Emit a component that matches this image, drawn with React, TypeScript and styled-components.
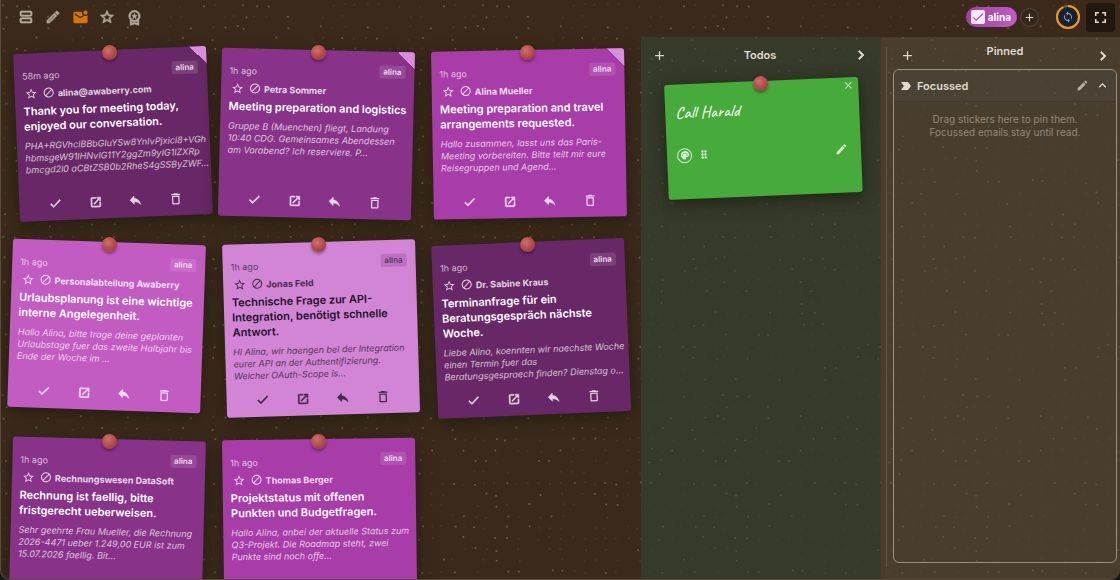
import React from "react";
import styled, { createGlobalStyle, css } from "styled-components";
import {
  MdAdd,
  MdCheck,
  MdChevronRight,
  MdClose,
  MdDeleteOutline,
  MdDoNotDisturbAlt,
  MdDragIndicator,
  MdExpandLess,
  MdFullscreen,
  MdLabelImportant,
  MdMarkEmailUnread,
  MdModeEdit,
  MdOpenInNew,
  MdOutlineModeEdit,
  MdOutlineViewAgenda,
  MdOutlineWorkspacePremium,
  MdPalette,
  MdReply,
  MdStarOutline,
  MdSync,
} from "react-icons/md";

const GlobalStyle = createGlobalStyle`
  * { box-sizing: border-box; }
  body {
    margin: 0;
    background: #16171d;
    font-family: Inter, "Liberation Sans", sans-serif;
    color: #e0d9cf;
  }
  h2, h3, p { margin: 0; }
`;

const Shell = styled.div`
  position: relative;
  display: flex;
  flex-direction: column;
  height: 100vh;
  overflow: hidden;
  background: #3b2a1c;
  border: solid #5a4a3c;
  border-width: 0 0 1px 1px;
  border-radius: 0 0 10px 10px;
`;

const Texture = styled.svg`
  position: absolute;
  inset: 0;
  width: 100%;
  height: 100%;
  pointer-events: none;
`;

const IconButton = styled.button<{ $size?: number; $tone?: string }>`
  display: inline-flex;
  align-items: center;
  justify-content: center;
  flex: none;
  width: ${(p) => p.$size ?? 24}px;
  height: ${(p) => p.$size ?? 24}px;
  padding: 0;
  border: 0;
  background: none;
  color: ${(p) => p.$tone ?? "inherit"};
  cursor: pointer;
`;

/* Heavier outline for the icons of the bars and the notes. */
const BoldIconButton = styled(IconButton)`
  path:not([fill="none"]) {
    stroke: currentColor;
    stroke-width: 1px;
  }
`;

const TopBar = styled.header`
  position: relative;
  display: flex;
  align-items: center;
  justify-content: space-between;
  flex: none;
  height: 37px;
  padding: 0 5px 3px 13px;
`;

const Tools = styled.nav`
  display: flex;
  gap: 3px;
  color: #b5aa9f;
`;

const Account = styled.div`
  display: flex;
  align-items: center;
`;

const Chip = styled.label`
  display: flex;
  align-items: center;
  gap: 3px;
  height: 20px;
  padding: 0 6px 0 5px;
  border-radius: 10px;
  background: linear-gradient(90deg, #a13fa6, #bd5cc2);
  color: #fff;
  font-size: 10px;
  font-weight: 700;
`;

const Tick = styled.span`
  position: relative;
  display: flex;
  color: #a445a9;
  svg {
    position: absolute;
    inset: 0;
    pointer-events: none;
  }
`;

const TickInput = styled.input`
  appearance: none;
  width: 14px;
  height: 14px;
  margin: 0;
  border-radius: 2px;
  background: #f7e9f8;
`;

const RoundButton = styled(IconButton)`
  margin: 0 16px 0 3px;
  border: 1px solid #524436;
  border-radius: 50%;
  background: #35271b;
`;

const SyncButton = styled(IconButton)`
  position: relative;
  svg + svg {
    position: absolute;
  }
`;

const FullscreenButton = styled(IconButton)`
  margin-left: 5px;
  border-radius: 4px;
  background: #20170f;
`;

const Boards = styled.main`
  position: relative;
  display: grid;
  grid-template-columns: minmax(0, 640fr) minmax(0, 240fr) minmax(0, 239fr);
  flex: 1;
  min-height: 0;
`;

const Inbox = styled.section`
  display: grid;
  grid-template-columns: repeat(3, minmax(0, 1fr));
  grid-auto-rows: max-content;
  align-content: start;
  align-items: start;
  gap: 24px 16px;
  padding: 13px 17px 0 12px;
  overflow: hidden;
`;

type Tone = { paper: string; fold?: string; dark?: boolean };

const Note = styled.article<{ $tilt: number; $tone: Tone }>`
  position: relative;
  display: flex;
  flex-direction: column;
  min-height: 168px;
  padding: 14px 9px 5px 8px;
  border-radius: 3px;
  background: ${(p) => p.$tone.paper};
  box-shadow: 0 4px 16px rgba(26, 24, 8, 0.7);
  color: ${(p) => (p.$tone.dark ? "#20122a" : "#fff")};
  transform: rotate(${(p) => p.$tilt}deg);
  transform-origin: 50% 0;
  ${(p) =>
    p.$tone.fold &&
    css`
      &::after {
        content: "";
        position: absolute;
        top: 0;
        right: 0;
        width: 17px;
        height: 17px;
        border-top-right-radius: 3px;
        background: linear-gradient(45deg, transparent 50%, ${p.$tone.fold} 50%);
      }
    `}
`;

const Pin = styled.span`
  position: absolute;
  top: -5px;
  left: 50%;
  width: 15px;
  height: 15px;
  margin-left: -8px;
  border-radius: 50%;
  background: radial-gradient(circle at 40% 35%, #cf7069, #b04c4b 50%, #8f3637);
  box-shadow: 0 2px 3px rgba(0, 0, 0, 0.35);
`;

const NoteTop = styled.div`
  display: flex;
  align-items: flex-start;
  justify-content: space-between;
  height: 17px;
`;

const Ago = styled.time`
  font-size: 9px;
  line-height: 17px;
  opacity: 0.65;
`;

const Owner = styled.span<{ $dark?: boolean }>`
  padding: 0 4px;
  border-radius: 2px;
  background: ${(p) => (p.$dark ? "rgba(90, 20, 100, 0.18)" : "rgba(255, 255, 255, 0.12)")};
  font-size: 8px;
  font-weight: 600;
  line-height: 13px;
  color: ${(p) => (p.$dark ? "#5b3563" : "#f0dcf2")};
`;

const Sender = styled.div`
  display: flex;
  align-items: center;
  height: 18px;
  margin-left: -1px;
  opacity: 0.8;
  font-size: 9px;
  font-weight: 700;
  white-space: nowrap;
`;

const Subject = styled.h3`
  margin-top: 2px;
  font-size: 11px;
  font-weight: 600;
  line-height: 15px;
  white-space: nowrap;
`;

const Preview = styled.p`
  margin-top: 6px;
  font-size: 9px;
  font-style: italic;
  line-height: 12px;
  opacity: 0.7;
  white-space: nowrap;
`;

const Actions = styled.div`
  display: flex;
  justify-content: space-evenly;
  margin-top: auto;
  padding-top: 6px;
  opacity: 0.8;
`;

const Column = styled.section<{ $tint: string }>`
  position: relative;
  display: flex;
  flex-direction: column;
  min-width: 0;
  background: ${(p) => p.$tint};
`;

const PinnedColumn = styled(Column)`
  padding: 0 3px 16px 9px;
  border-left: 3px solid #51382a;
  &::before {
    content: "";
    position: absolute;
    top: 10px;
    bottom: 12px;
    left: 2px;
    width: 1px;
    background: #695443;
  }
`;

const ColumnHead = styled.header`
  display: flex;
  align-items: center;
  justify-content: space-between;
  flex: none;
  height: 36px;
  padding: 0 8px 0 6px;
`;

const PinnedHead = styled(ColumnHead)`
  height: 32px;
  padding: 5px 2px 0;
`;

const ColumnTitle = styled.h2<{ $raised?: boolean }>`
  font-size: 11px;
  font-weight: 600;
  line-height: 18px;
  ${(p) => p.$raised && "align-self: flex-start;"}
`;

const Todo = styled(Note)`
  min-height: 115px;
  margin: 8px 23px;
  padding: 19px 10px 0;
`;

const TodoText = styled.p`
  font-family: Caveat, Lato, sans-serif;
  font-size: 17px;
  font-weight: 500;
  line-height: 20px;
`;

const TodoTools = styled.div`
  display: flex;
  align-items: center;
  margin-top: 22px;
  opacity: 0.8;
  button:last-child {
    margin-left: auto;
  }
`;

const PaletteButton = styled(IconButton)`
  margin-right: 6px;
  border: 1px solid currentColor;
  border-radius: 50%;
`;

const CloseButton = styled(IconButton)`
  position: absolute;
  top: 1px;
  right: 3px;
  opacity: 0.7;
`;

const FocusBox = styled.div`
  display: flex;
  flex-direction: column;
  flex: 1;
  border: 1px solid #9c9183;
  border-radius: 6px;
  overflow: hidden;
`;

const FocusHead = styled.header`
  display: flex;
  align-items: center;
  height: 32px;
  padding: 0 4px 0 5px;
  background: rgba(80, 76, 72, 0.35);
  border-bottom: 1px solid #43372a;
`;

const FocusTitle = styled.h3`
  flex: 1;
  margin-left: 4px;
  font-size: 11px;
  font-weight: 600;
`;

const Hint = styled.p`
  padding-top: 11px;
  color: #93887a;
  font-size: 10px;
  line-height: 13px;
  text-align: center;
`;

/* Cork speckles: x, y and brightness are spread over one repeating tile. */
const TILE_W = 240;
const TILE_H = 390;
const SPECKS = (() => {
  const out: { x: number; y: number; o: number }[] = [];
  let seed = 41;
  const next = () => {
    seed = (seed * 16807) % 2147483647;
    return seed / 2147483647;
  };
  for (let row = 0; row < 35; row++) {
    for (let col = 0; col < 22; col++) {
      const jx = next() * 4 - 2;
      const jy = next() * 3 - 1;
      const level = next();
      if (level > 0.4) {
        out.push({ x: col * 11 + 4 + jx, y: row * 11 + 5 + jy, o: level > 0.78 ? 0.6 : 0.16 });
      }
    }
  }
  return out;
})();

type Mail = {
  ago: string;
  from: string;
  subject: string[];
  preview: string[];
  tilt: number;
  tone: Tone;
};

const FOLD = "#d88edb";
const PLUM = "#682766";
const GRAPE = "#883289";
const ORCHID = "#a83ca8";

const MAILS: Mail[] = [
  {
    ago: "58m ago",
    from: "alina@awaberry.com",
    subject: ["Thank you for meeting today,", "enjoyed our conversation."],
    preview: ["PHA+RGVhciBBbGluYSw8YnIvPjxici8+VGh", "hbmsgeW91IHNvIG11Y2ggZm9yIG1lZXRp", "bmcgd2l0 aCBtZSB0b2RheS4gSSByZWF…"],
    tilt: -2.4,
    tone: { paper: PLUM, fold: FOLD },
  },
  {
    ago: "1h ago",
    from: "Petra Sommer",
    subject: ["Meeting preparation and logistics"],
    preview: ["Gruppe B (Muenchen) fliegt, Landung", "10:40 CDG. Gemeinsames Abendessen", "am Vorabend? Ich reserviere. P…"],
    tilt: 1.4,
    tone: { paper: GRAPE, fold: FOLD },
  },
  {
    ago: "1h ago",
    from: "Alina Mueller",
    subject: ["Meeting preparation and travel", "arrangements requested."],
    preview: ["Hallo zusammen, lasst uns das Paris-", "Meeting vorbereiten. Bitte teilt mir eure", "Reisegruppen und Agend…"],
    tilt: -1,
    tone: { paper: ORCHID, fold: FOLD },
  },
  {
    ago: "1h ago",
    from: "Personalabteilung Awaberry",
    subject: ["Urlaubsplanung ist eine wichtige", "interne Angelegenheit."],
    preview: ["Hallo Alina, bitte trage deine geplanten", "Urlaubstage fuer das zweite Halbjahr bis", "Ende der Woche im …"],
    tilt: 2,
    tone: { paper: "#c25cc2" },
  },
  {
    ago: "1h ago",
    from: "Jonas Feld",
    subject: ["Technische Frage zur API-", "Integration, benötigt schnelle", "Antwort."],
    preview: ["Hi Alina, wir haengen bei der Integration", "eurer API an der Authentifizierung.", "Welcher OAuth-Scope is…"],
    tilt: -1.7,
    tone: { paper: "#d285d4", dark: true },
  },
  {
    ago: "1h ago",
    from: "Dr. Sabine Kraus",
    subject: ["Terminanfrage für ein", "Beratungsgespräch nächste", "Woche."],
    preview: ["Liebe Alina, koennten wir naechste Woche", "einen Termin fuer das", "Beratungsgespraech finden? Dienstag o…"],
    tilt: -2.4,
    tone: { paper: PLUM },
  },
  {
    ago: "1h ago",
    from: "Rechnungswesen DataSoft",
    subject: ["Rechnung ist faellig, bitte", "fristgerecht ueberweisen."],
    preview: ["Sehr geehrte Frau Mueller, die Rechnung", "2026-4471 ueber 1.249,00 EUR ist zum", "15.07.2026 faellig. Bit…"],
    tilt: 1.5,
    tone: { paper: GRAPE },
  },
  {
    ago: "1h ago",
    from: "Thomas Berger",
    subject: ["Projektstatus mit offenen", "Punkten und Budgetfragen."],
    preview: ["Hallo Alina, anbei der aktuelle Status zum", "Q3-Projekt. Die Roadmap steht, zwei", "Punkte sind noch offe…"],
    tilt: -0.8,
    tone: { paper: ORCHID },
  },
];

const lines = (parts: string[]) =>
  parts.map((part, i) => (
    <React.Fragment key={part}>
      {i > 0 && <br />}
      {part}
    </React.Fragment>
  ));

const MailNote = ({ mail }: { mail: Mail }) => (
  <Note $tilt={mail.tilt} $tone={mail.tone}>
    <Pin />
    <NoteTop>
      <Ago>{mail.ago}</Ago>
      <Owner $dark={mail.tone.dark}>alina</Owner>
    </NoteTop>
    <Sender>
      <IconButton $size={18} aria-label="Star"><MdStarOutline size={13} /></IconButton>
      <IconButton $size={18} aria-label="Block sender"><MdDoNotDisturbAlt size={12} /></IconButton>
      {mail.from}
    </Sender>
    <Subject>{lines(mail.subject)}</Subject>
    <Preview>{lines(mail.preview)}</Preview>
    <Actions>
      <BoldIconButton aria-label="Done"><MdCheck size={14} /></BoldIconButton>
      <BoldIconButton aria-label="Open"><MdOpenInNew size={13} /></BoldIconButton>
      <BoldIconButton aria-label="Reply"><MdReply size={14} /></BoldIconButton>
      <IconButton aria-label="Delete"><MdDeleteOutline size={15} /></IconButton>
    </Actions>
  </Note>
);

export default function App() {
  return (
    <Shell>
      <GlobalStyle />
      <Texture aria-hidden="true">
        <defs>
          <pattern id="cork" width={TILE_W} height={TILE_H} patternUnits="userSpaceOnUse">
            {SPECKS.map((s, i) => (
              <circle key={i} cx={s.x} cy={s.y} r="1" fill="#8f7a60" opacity={s.o} />
            ))}
          </pattern>
        </defs>
        <rect width="100%" height="100%" fill="url(#cork)" />
      </Texture>

      <TopBar>
        <Tools aria-label="Views">
          <BoldIconButton aria-label="Board"><MdOutlineViewAgenda size={16} /></BoldIconButton>
          <BoldIconButton aria-label="Write"><MdOutlineModeEdit size={16} /></BoldIconButton>
          <IconButton aria-label="Unread" $tone="#d5760a"><MdMarkEmailUnread size={17} /></IconButton>
          <BoldIconButton aria-label="Starred"><MdStarOutline size={16} /></BoldIconButton>
          <BoldIconButton aria-label="Important"><MdOutlineWorkspacePremium size={17} /></BoldIconButton>
        </Tools>
        <Account>
          <Chip>
            <Tick>
              <TickInput type="checkbox" defaultChecked />
              <MdCheck size={14} />
            </Tick>
            alina
          </Chip>
          <RoundButton $size={19} aria-label="Add account"><MdAdd size={13} /></RoundButton>
          <SyncButton $size={26} aria-label="Sync" $tone="#8fa3b0">
            <svg width="26" height="26" viewBox="0 0 26 26">
              <circle cx="13" cy="13" r="11" fill="#16222d" stroke="#6c5b49" strokeWidth="2" />
              <circle
                cx="13"
                cy="13"
                r="11"
                fill="none"
                stroke="#f59a14"
                strokeWidth="2"
                pathLength="100"
                strokeDasharray="93 7"
                transform="rotate(-90 13 13)"
              />
            </svg>
            <MdSync size={12} />
          </SyncButton>
          <FullscreenButton $size={29} aria-label="Full screen"><MdFullscreen size={19} /></FullscreenButton>
        </Account>
      </TopBar>

      <Boards>
        <Inbox aria-label="Inbox">
          {MAILS.map((mail) => (
            <MailNote key={mail.from} mail={mail} />
          ))}
        </Inbox>

        <Column $tint="rgba(48, 74, 57, 0.5)">
          <ColumnHead>
            <IconButton aria-label="Add todo"><MdAdd size={15} /></IconButton>
            <ColumnTitle>Todos</ColumnTitle>
            <BoldIconButton aria-label="Next"><MdChevronRight size={18} /></BoldIconButton>
          </ColumnHead>
          <Todo $tilt={-2.4} $tone={{ paper: "#47ab3c" }}>
            <Pin />
            <CloseButton $size={14} aria-label="Close"><MdClose size={12} /></CloseButton>
            <TodoText>Call Harald</TodoText>
            <TodoTools>
              <PaletteButton $size={15} aria-label="Colour"><MdPalette size={10} /></PaletteButton>
              <BoldIconButton $size={12} aria-label="Move"><MdDragIndicator size={14} /></BoldIconButton>
              <IconButton $size={20} aria-label="Edit"><MdModeEdit size={13} /></IconButton>
            </TodoTools>
          </Todo>
        </Column>

        <PinnedColumn $tint="rgba(88, 79, 61, 0.5)">
          <PinnedHead>
            <IconButton aria-label="Add pinned"><MdAdd size={15} /></IconButton>
            <ColumnTitle $raised>Pinned</ColumnTitle>
            <BoldIconButton aria-label="Next"><MdChevronRight size={18} /></BoldIconButton>
          </PinnedHead>
          <FocusBox>
            <FocusHead>
              <MdLabelImportant size={14} />
              <FocusTitle>Focussed</FocusTitle>
              <IconButton $size={20} aria-label="Rename" $tone="#b5aa9f"><MdModeEdit size={13} /></IconButton>
              <IconButton $size={20} aria-label="Collapse"><MdExpandLess size={15} /></IconButton>
            </FocusHead>
            <Hint>
              Drag stickers here to pin them.
              <br />
              Focussed emails stay until read.
            </Hint>
          </FocusBox>
        </PinnedColumn>
      </Boards>
    </Shell>
  );
}
